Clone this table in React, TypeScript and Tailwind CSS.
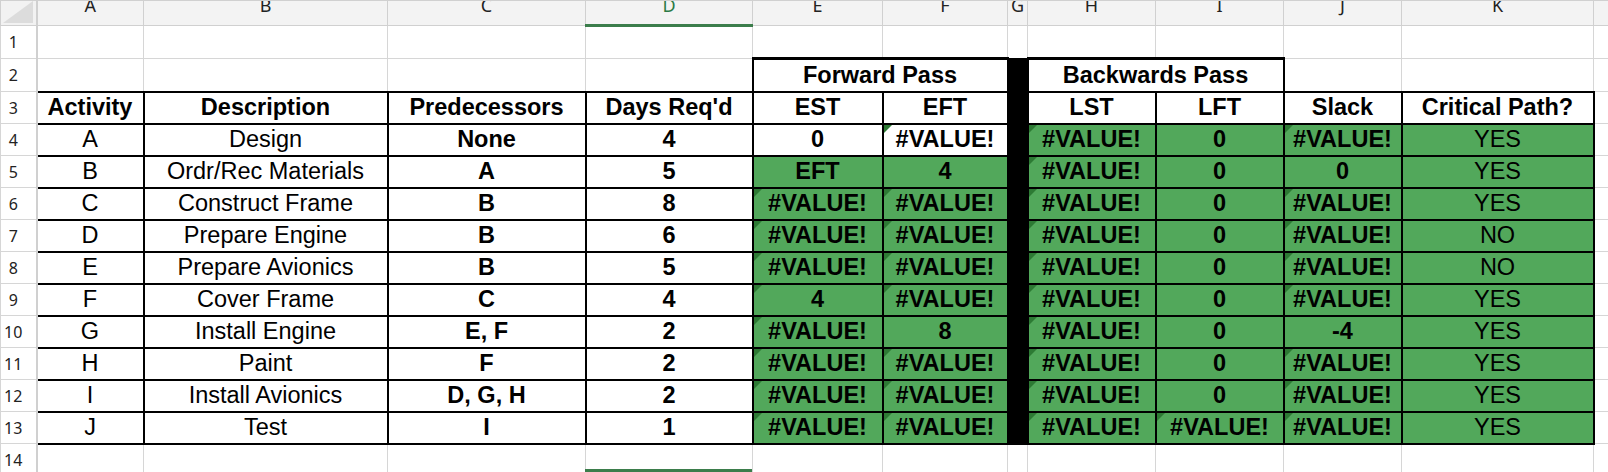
import React from "react";

type Cell = { t: string; b?: boolean; g?: boolean; tri?: boolean };

const cols = [36, 107, 244, 198, 167, 130, 125, 20, 128, 128, 118, 192, 15];
const letters = ["A", "B", "C", "D", "E", "F", "G", "H", "I", "J", "K", ""];

const V = (g = true): Cell => ({ t: "#VALUE!", b: true, g, tri: true });
const N = (t: string, g = true): Cell => ({ t, b: true, g });

// activity, description, predecessors, days, then E F | H I J K
const rows: { a: string; d: string; p: string; n: string; fwd: Cell[]; back: Cell[] }[] = [
  { a: "A", d: "Design", p: "None", n: "4", fwd: [N("0", false), V(false)], back: [V(), N("0"), V(), { t: "YES", g: true }] },
  { a: "B", d: "Ordr/Rec Materials", p: "A", n: "5", fwd: [N("EFT"), N("4")], back: [V(), N("0"), N("0"), { t: "YES", g: true }] },
  { a: "C", d: "Construct Frame", p: "B", n: "8", fwd: [V(), V()], back: [V(), N("0"), V(), { t: "YES", g: true }] },
  { a: "D", d: "Prepare Engine", p: "B", n: "6", fwd: [V(), V()], back: [V(), N("0"), V(), { t: "NO", g: true }] },
  { a: "E", d: "Prepare Avionics", p: "B", n: "5", fwd: [V(), V()], back: [V(), N("0"), V(), { t: "NO", g: true }] },
  { a: "F", d: "Cover Frame", p: "C", n: "4", fwd: [{ ...N("4"), tri: true }, V()], back: [V(), N("0"), V(), { t: "YES", g: true }] },
  { a: "G", d: "Install Engine", p: "E, F", n: "2", fwd: [V(), N("8")], back: [V(), N("0"), N("-4"), { t: "YES", g: true }] },
  { a: "H", d: "Paint", p: "F", n: "2", fwd: [V(), V()], back: [V(), N("0"), V(), { t: "YES", g: true }] },
  { a: "I", d: "Install Avionics", p: "D, G, H", n: "2", fwd: [V(), V()], back: [V(), N("0"), V(), { t: "YES", g: true }] },
  { a: "J", d: "Test", p: "I", n: "1", fwd: [V(), V()], back: [V(), V(), V(), { t: "YES", g: true }] },
];

const GRID = "border border-[#d6d6d6]";
const BOX = "border-2 border-black";

function RowNum({ n }: { n: number }) {
  return (
    <td className="p-0 pr-[10px] text-center border border-[#d6d6d6] border-r-2 border-r-[#d0d0d0] text-[16px] text-[#222] font-['Noto_Sans',sans-serif]">
      {n}
    </td>
  );
}

function Box({ c }: { c: Cell }) {
  return (
    <td
      className={`relative p-0 text-center whitespace-nowrap overflow-hidden ${BOX} ${c.g ? "bg-[#52a85b]" : "bg-white"} ${
        c.b ? "font-bold" : ""
      }`}
    >
      {c.tri && (
        <span className="absolute left-0 top-0 size-[9px] bg-[#2d7a34] [clip-path:polygon(0_0,100%_0,0_100%)]" />
      )}
      {c.t}
    </td>
  );
}

function Plain({ t, b }: { t: string; b?: boolean }) {
  return <td className={`p-0 text-center whitespace-nowrap ${BOX} bg-white ${b ? "font-bold" : ""}`}>{t}</td>;
}

export default function App() {
  return (
    <div className="relative w-[1608px] h-[472px] overflow-hidden bg-white text-black font-['Liberation_Sans',Arial,sans-serif]">
      <table className="table-fixed border-collapse w-[1608px] text-[23.5px] leading-none">
        <colgroup>
          {cols.map((w, i) => (
            <col key={i} style={{ width: w }} />
          ))}
        </colgroup>
        <tbody>
          {/* column letters, top half cropped off like the screenshot */}
          <tr className="h-[25px]">
            <td className="p-0 bg-[#f2f2f2] border border-[#d0d0d0] border-r-2 overflow-hidden">
              <svg width="34" height="24" className="block">
                <polygon points="2,22 32,22 32,0" fill="#dcdcdc" />
              </svg>
            </td>
            {letters.map((l, i) => (
              <td
                key={i}
                className={`p-0 align-top text-center overflow-hidden bg-[#f3f3f3] border border-[#d0d0d0] text-[18px] font-['Noto_Sans',sans-serif] ${
                  l === "D" ? "text-[#2b7a45] border-b-[3px] border-b-[#3b7d4b]" : "text-[#222]"
                }`}
              >
                <div className="-mt-[5px] leading-[18px]">{l}</div>
              </td>
            ))}
          </tr>

          {/* row 1 */}
          <tr className="h-[33px]">
            <RowNum n={1} />
            {letters.map((_, i) => (
              <td key={i} className={`p-0 ${GRID}`} />
            ))}
          </tr>

          {/* row 2 */}
          <tr className="h-[33px]">
            <RowNum n={2} />
            <td className={`p-0 ${GRID}`} />
            <td className={`p-0 ${GRID}`} />
            <td className={`p-0 ${GRID}`} />
            <td className={`p-0 ${GRID}`} />
            <td colSpan={2} className={`p-0 text-center font-bold ${BOX} border-t-[3px]`}>
              Forward Pass
            </td>
            <td className="p-0 bg-black border-2 border-black" />
            <td colSpan={2} className={`p-0 text-center font-bold ${BOX} border-t-[3px]`}>
              Backwards Pass
            </td>
            <td className={`p-0 ${GRID}`} />
            <td className={`p-0 ${GRID}`} />
            <td className={`p-0 ${GRID}`} />
          </tr>

          {/* row 3 headers */}
          <tr className="h-[32px]">
            <RowNum n={3} />
            {["Activity", "Description", "Predecessors", "Days Req'd", "EST", "EFT"].map((h) => (
              <Plain key={h} t={h} b />
            ))}
            <td className="p-0 bg-black border-2 border-black" />
            {["LST", "LFT", "Slack", "Critical Path?"].map((h) => (
              <Plain key={h} t={h} b />
            ))}
            <td className={`p-0 ${GRID}`} />
          </tr>

          {rows.map((r, i) => (
            <tr key={r.a} className="h-[32px]">
              <RowNum n={i + 4} />
              <Plain t={r.a} />
              <Plain t={r.d} />
              <Plain t={r.p} b />
              <Plain t={r.n} b />
              {r.fwd.map((c, j) => (
                <Box key={j} c={c} />
              ))}
              <td className="p-0 bg-black border-2 border-black" />
              {r.back.map((c, j) => (
                <Box key={j} c={c} />
              ))}
              <td className={`p-0 ${GRID}`} />
            </tr>
          ))}

          {/* row 14 */}
          <tr className="h-[32px]">
            <RowNum n={14} />
            {letters.map((_, i) => (
              <td key={i} className={`p-0 ${GRID}`} />
            ))}
          </tr>
        </tbody>
      </table>
      {/* selected cell outline peeking in below D14 */}
      <div className="absolute left-[585px] top-[469px] w-[167px] h-[4px] bg-[#3b7d4b]" />
    </div>
  );
}
